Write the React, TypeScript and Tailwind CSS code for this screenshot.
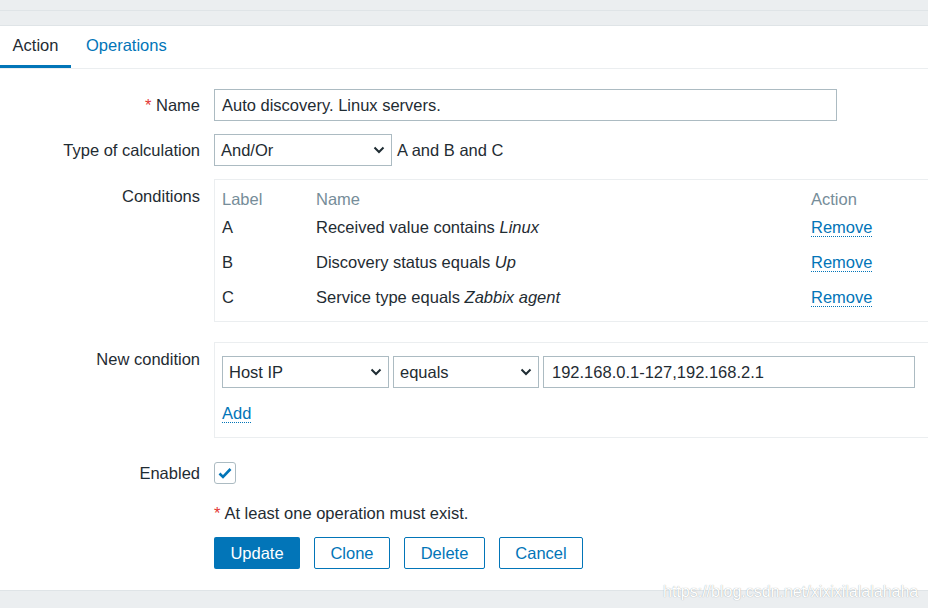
import React from "react";

const Chevron = () => (
  <svg width="12" height="8" viewBox="0 0 12 8" className="shrink-0">
    <path d="M1.5 1.5 L6 6 L10.5 1.5" fill="none" stroke="#1f2c33" strokeWidth="2" />
  </svg>
);

const Select = ({ value, w }: { value: string; w: string }) => (
  <div
    className={`flex h-[32px] ${w} items-center justify-between border border-[#acbbc2] bg-white pl-[6px] pr-[6px]`}
  >
    <span>{value}</span>
    <Chevron />
  </div>
);

const LinkText = ({ children }: { children: React.ReactNode }) => (
  <span className="border-b border-dotted border-[#0275b8] leading-[18px] text-[#0275b8]">
    {children}
  </span>
);

const conditions = [
  { label: "A", text: "Received value contains ", em: "Linux" },
  { label: "B", text: "Discovery status equals ", em: "Up" },
  { label: "C", text: "Service type equals ", em: "Zabbix agent" },
];

export default function App() {
  return (
    <div
      className="relative h-[608px] w-[928px] overflow-hidden bg-white text-[16.5px] text-[#1f2c33]"
      style={{ fontFamily: '"Liberation Sans", Arial, sans-serif' }}
    >
      {/* top band */}
      <div className="h-[11px] border-b border-[#dfe4e7] bg-[#ebeef0]" />
      <div className="h-[15px] border-b border-[#dfe4e7] bg-[#ebeef0]" />

      {/* tabs */}
      <div className="flex h-[43px] border-b border-[#ebeef0]">
        <div className="flex w-[71px] items-center justify-center border-b-[3px] border-[#0275b8]">
          Action
        </div>
        <div className="flex items-center px-[15px] pb-[3px] text-[#0275b8]">Operations</div>
      </div>

      {/* form */}
      <div className="flex flex-col pt-[20px]">
        <div className="flex h-[32px] items-center">
          <div className="w-[200px] text-right">
            <span className="text-[#e33734]">*</span> Name
          </div>
          <div className="ml-[14px] flex h-[32px] w-[623px] items-center border border-[#acbbc2] px-[7px]">
            Auto discovery. Linux servers.
          </div>
        </div>

        <div className="mt-[13px] flex h-[32px] items-center">
          <div className="w-[200px] text-right">Type of calculation</div>
          <div className="ml-[14px] flex items-center gap-[5px]">
            <Select value="And/Or" w="w-[178px]" />
            <span>A and B and C</span>
          </div>
        </div>

        <div className="mt-[13px] flex">
          <div className="w-[200px] pt-[5px] text-right">Conditions</div>
          <div className="ml-[14px] flex h-[143px] flex-1 flex-col border border-r-0 border-[#ebeef0] pl-[7px] pt-[8px]">
            <div className="flex h-[22px] items-center text-[#768d99]">
              <div className="w-[94px]">Label</div>
              <div className="w-[495px]">Name</div>
              <div>Action</div>
            </div>
            {conditions.map((c, i) => (
              <div
                key={c.label}
                className={`flex h-[22px] items-center ${i === 0 ? "mt-[6px]" : "mt-[13px]"}`}
              >
                <div className="w-[94px]">{c.label}</div>
                <div className="w-[495px]">
                  {c.text}
                  <i>{c.em}</i>
                </div>
                <div>
                  <LinkText>Remove</LinkText>
                </div>
              </div>
            ))}
          </div>
        </div>

        <div className="mt-[20px] flex">
          <div className="w-[200px] pt-[5px] text-right">New condition</div>
          <div className="ml-[14px] flex h-[96px] flex-1 flex-col border border-r-0 border-[#ebeef0] pl-[7px] pt-[13px]">
            <div className="flex items-center gap-[4px]">
              <Select value="Host IP" w="w-[167px]" />
              <Select value="equals" w="w-[146px]" />
              <div className="flex h-[32px] w-[372px] items-center border border-[#acbbc2] px-[8px]">
                192.168.0.1-127,192.168.2.1
              </div>
            </div>
            <div className="mt-[16px] flex">
              <LinkText>Add</LinkText>
            </div>
          </div>
        </div>

        <div className="mt-[19px] flex h-[32px] items-center">
          <div className="w-[200px] text-right">Enabled</div>
          <div className="ml-[14px] flex h-[22px] w-[22px] items-center justify-center rounded-[3px] border border-[#acbbc2]">
            <svg width="14" height="12" viewBox="0 0 14 12">
              <path d="M1.5 6.5 L5 10 L12.5 2" fill="none" stroke="#0275b8" strokeWidth="2.6" />
            </svg>
          </div>
        </div>

        <div className="ml-[214px] mt-[13px] flex h-[22px] items-center">
          <span className="mr-[4px] text-[#e33734]">*</span>At least one operation must exist.
        </div>

        <div className="ml-[214px] mt-[13px] flex h-[32px] items-stretch">
          <div className="flex w-[86px] items-center justify-center rounded-[2px] bg-[#0275b8] text-white">
            Update
          </div>
          <div className="ml-[14px] flex w-[76px] items-center justify-center rounded-[2px] border border-[#0275b8] text-[#0275b8]">
            Clone
          </div>
          <div className="ml-[14px] flex w-[81px] items-center justify-center rounded-[2px] border border-[#0275b8] text-[#0275b8]">
            Delete
          </div>
          <div className="ml-[14px] flex w-[84px] items-center justify-center rounded-[2px] border border-[#0275b8] text-[#0275b8]">
            Cancel
          </div>
        </div>
      </div>

      {/* bottom band */}
      <div className="absolute bottom-0 left-0 h-[18px] w-full border-t border-[#dfe4e7] bg-[#ebeef0]" />

      {/* watermark */}
      <div className="absolute left-[663px] top-[580px] text-[16px] text-white [text-shadow:0_0_1px_#8f989d]">
        https://blog.csdn.net/xixixilalalahaha
      </div>
    </div>
  );
}
